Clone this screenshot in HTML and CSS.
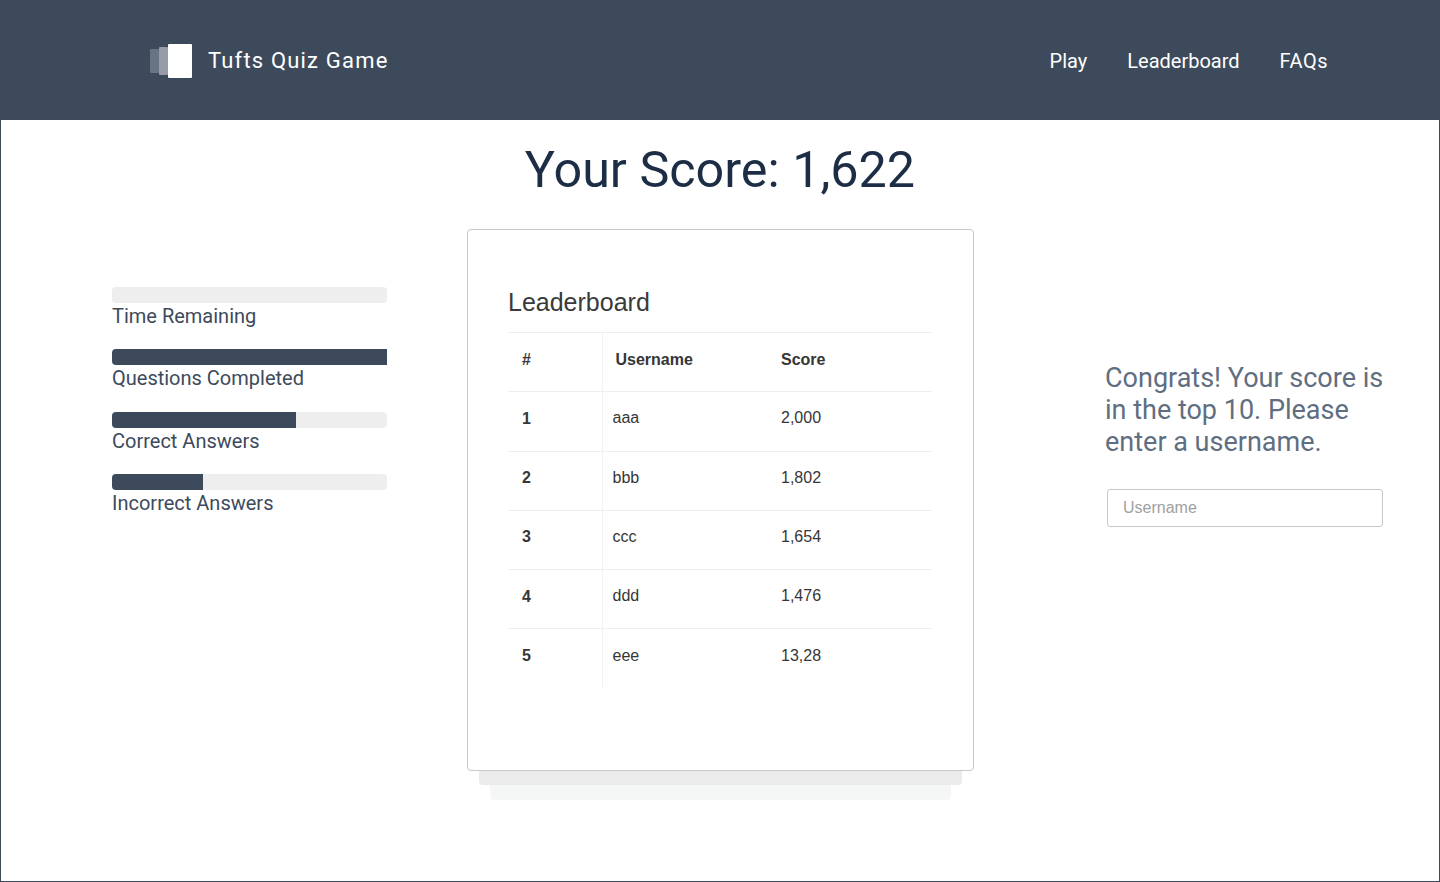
FILE: index.html
```html
<!DOCTYPE html>
<html lang="en">

<head>
  <meta charset="UTF-8">
  <meta name="viewport" content="width=device-width, initial-scale=1.0">

  <title>Tufts Quiz Game</title>
  <link rel="stylesheet" href="styles.css">
</head>

<body>
  <div class="page">
    <header class="site-header">
      <a class="brand" href="#">
        <span class="brand-logo">
          <span class="logo-back"></span>
          <span class="logo-mid"></span>
          <span class="logo-front"></span>
        </span>
        <span class="brand-name">Tufts Quiz Game</span>
      </a>
      <nav class="site-nav">
        <a href="#">Play</a>
        <a href="#">Leaderboard</a>
        <a href="#">FAQs</a>
      </nav>
    </header>

    <h1 class="score-title">Your Score: 1,622</h1>

    <main class="results">
      <section class="stats">
        <div class="stat">
          <div class="bar"></div>
          <div class="stat-label">Time Remaining</div>
        </div>
        <div class="stat">
          <div class="bar"><div class="bar-fill" style="width: 100%"></div></div>
          <div class="stat-label">Questions Completed</div>
        </div>
        <div class="stat">
          <div class="bar"><div class="bar-fill" style="width: 67%"></div></div>
          <div class="stat-label">Correct Answers</div>
        </div>
        <div class="stat">
          <div class="bar"><div class="bar-fill" style="width: 33%"></div></div>
          <div class="stat-label">Incorrect Answers</div>
        </div>
      </section>

      <section class="card-stack">
        <div class="card">
          <h2 class="card-title">Leaderboard</h2>
          <table class="board">
            <thead>
              <tr><th>#</th><th>Username</th><th>Score</th></tr>
            </thead>
            <tbody>
              <tr><th>1</th><td>aaa</td><td>2,000</td></tr>
              <tr><th>2</th><td>bbb</td><td>1,802</td></tr>
              <tr><th>3</th><td>ccc</td><td>1,654</td></tr>
              <tr><th>4</th><td>ddd</td><td>1,476</td></tr>
              <tr><th>5</th><td>eee</td><td>13,28</td></tr>
            </tbody>
          </table>
        </div>
        <div class="card-layer-one"></div>
        <div class="card-layer-two"></div>
      </section>

      <section class="congrats">
        <p class="congrats-text">Congrats! Your score is in the top 10. Please enter a username.</p>
        <input class="username" type="text" placeholder="Username">
      </section>
    </main>
  </div>
</body>
</html>
```

FILE: styles.css
```css
/* Styles for the results page */

* {
  box-sizing: border-box;
}

body {
  margin: 0;
  background-color: white;
  font-family: Roboto, sans-serif;
}

.page {
  height: 882px;
  border: 1px solid #3d4a5c;
  border-top: none;
  overflow: hidden;
}

.site-header {
  display: flex;
  align-items: center;
  justify-content: space-between;
  height: 120px;
  margin: 0 -1px;
  padding: 2px 112px 0 150px;
  background-color: #3d4a5c;
}

.brand {
  display: flex;
  align-items: center;
  gap: 16px;
  color: white;
  text-decoration: none;
}

.brand-logo {
  display: flex;
  align-items: center;
  width: 42px;
  height: 34px;
}

.logo-back,
.logo-mid,
.logo-front {
  display: block;
  flex: none;
  border-radius: 1px;
}

.logo-back {
  width: 9px;
  height: 24px;
  background-color: #687383;
}

.logo-mid {
  width: 9px;
  height: 28px;
  background-color: #959ca8;
}

.logo-front {
  width: 24px;
  height: 34px;
  background-color: white;
}

.brand-name {
  margin-bottom: 2px;
  font-size: 22px;
  font-weight: 400;
  letter-spacing: 1.18px;
}

.site-nav {
  display: flex;
  gap: 40px;
}

.site-nav a {
  color: white;
  font-size: 20px;
  text-decoration: none;
}

.site-nav a:last-child {
  letter-spacing: 0.5px;
}

.score-title {
  margin: 20px 0 0;
  color: #1c2d45;
  font-size: 50.3px;
  font-weight: 400;
  line-height: 60px;
  text-align: center;
}

.results {
  display: grid;
  grid-template-columns: 275px 507px 340px;
  margin-top: 29px;
  padding-left: 111px;
  column-gap: 80px;
}

.stats {
  padding-top: 58px;
}

.stat {
  margin-bottom: 20.4px;
}

.bar {
  height: 16px;
  background-color: #eeeeee;
  border-radius: 4px;
}

.bar-fill {
  height: 100%;
  background-color: #3d4a5c;
  border-radius: 4px 0 0 4px;
}

.stat-label {
  color: #3d4a5c;
  font-size: 20px;
  line-height: 26px;
}

.card {
  height: 542px;
  padding: 58px 41px 0 40px;
  background-color: white;
  border: 1px solid #c8c8c8;
  border-radius: 4px;
}

.card-title {
  margin: 0;
  color: #3a3a3a;
  font-family: "Liberation Sans", sans-serif;
  font-size: 25px;
  font-weight: 400;
  line-height: 28px;
}

.board {
  width: 424px;
  margin-top: 16px;
  border-collapse: collapse;
  table-layout: fixed;
  color: #363636;
  font-family: "Liberation Sans", sans-serif;
  font-size: 16px;
}

.board tr {
  height: 59.25px;
  border-top: 1px solid #eeeeee;
}

.board th,
.board td {
  padding: 0 0 4px;
  text-align: left;
}

.board tbody th {
  padding-bottom: 5px;
}

.board td {
  padding-bottom: 6px;
}

.board th:first-child {
  width: 94px;
  padding-left: 14px;
  border-right: 1px solid #f2f2f2;
}

.board thead th:nth-child(2) {
  width: 166px;
  padding-left: 13px;
}

.board td:nth-child(2) {
  padding-left: 10px;
}

.board td:nth-child(3),
.board thead th:nth-child(3) {
  padding-left: 13px;
}

.card-layer-one {
  height: 14px;
  margin: 0 12px;
  background-color: #ebebeb;
  border-radius: 0 0 4px 4px;
}

.card-layer-two {
  height: 15px;
  margin: 0 23px;
  background-color: #f5f7f7;
  border-radius: 0 0 4px 4px;
}

.congrats {
  margin-left: 51px;
  padding-top: 133px;
}

.congrats-text {
  margin: 0;
  color: #5f6e80;
  font-size: 27px;
  line-height: 32px;
}

.username {
  display: block;
  width: 276px;
  height: 38px;
  margin: 31px 0 0 2px;
  padding: 0 15px;
  border: 1px solid #c8c8c8;
  border-radius: 3px;
  font-family: "Liberation Sans", sans-serif;
  font-size: 16px;
}

.username::placeholder {
  color: #a0a0a0;
}
```
